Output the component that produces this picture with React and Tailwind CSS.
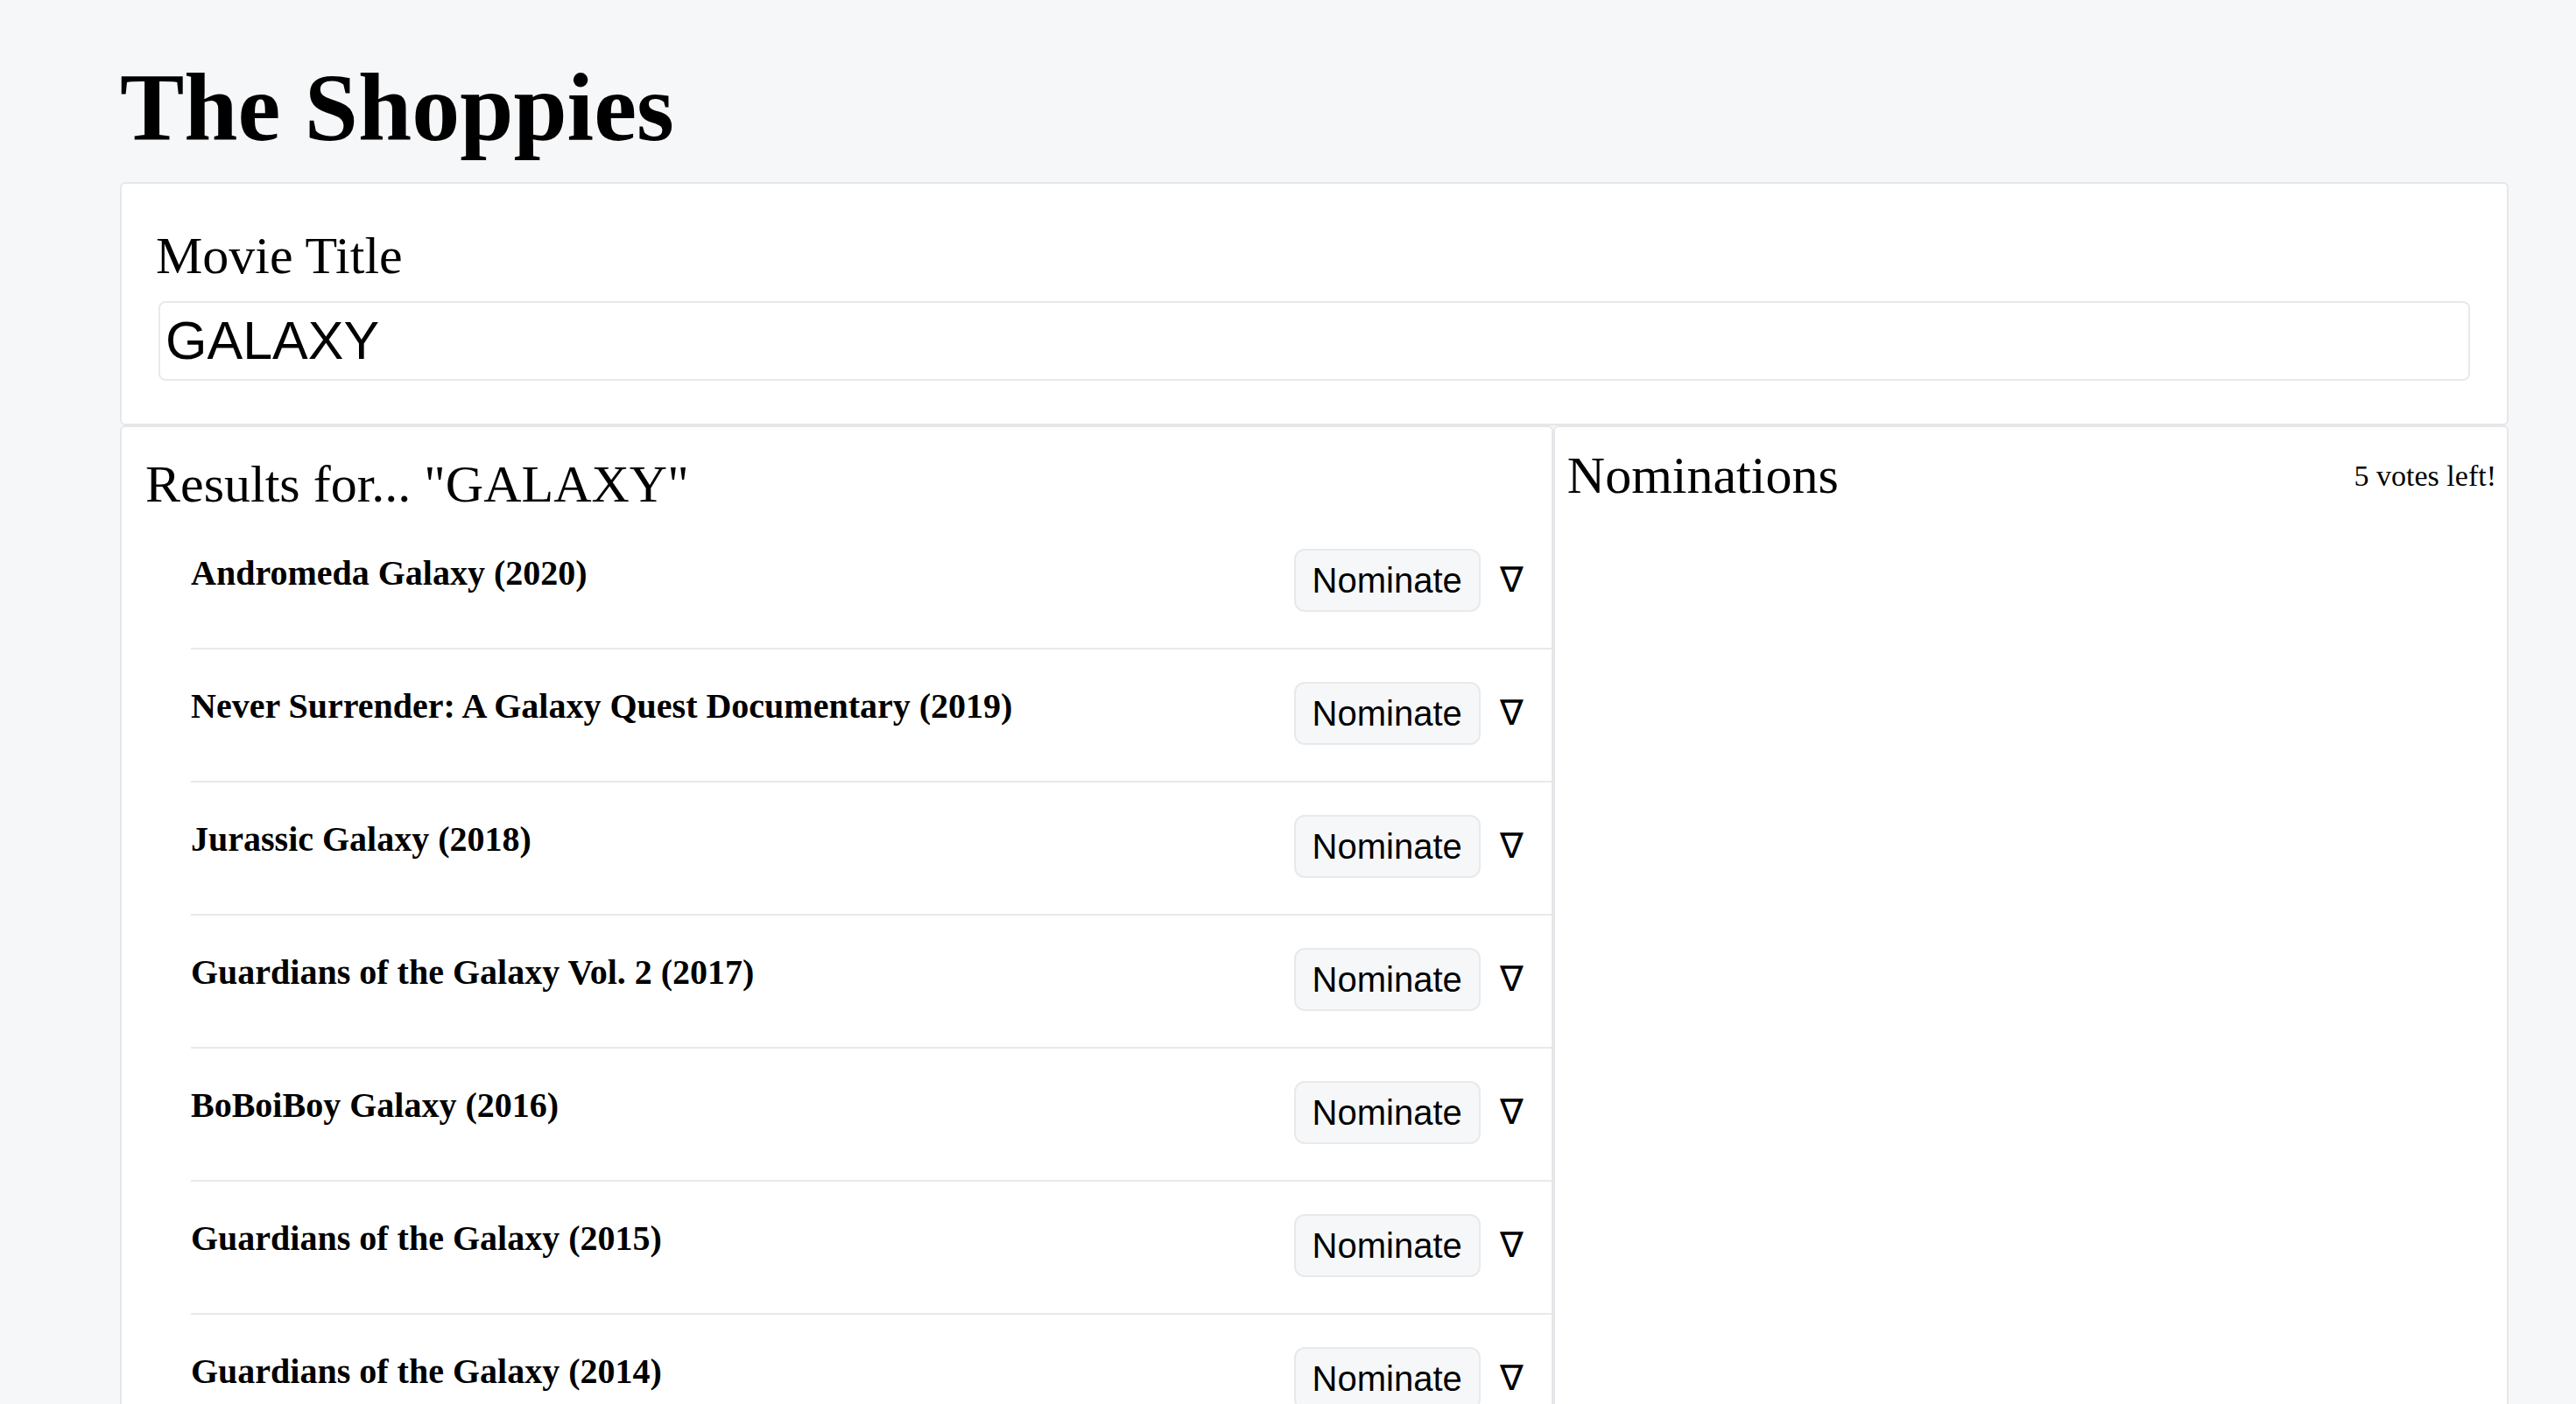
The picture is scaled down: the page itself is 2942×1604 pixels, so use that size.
const movies = [
  { title: "Andromeda Galaxy", year: "2020" },
  { title: "Never Surrender: A Galaxy Quest Documentary", year: "2019" },
  { title: "Jurassic Galaxy", year: "2018" },
  { title: "Guardians of the Galaxy Vol. 2", year: "2017" },
  { title: "BoBoiBoy Galaxy", year: "2016" },
  { title: "Guardians of the Galaxy", year: "2015" },
  { title: "Guardians of the Galaxy", year: "2014" },
  { title: "The Hitchhiker's Guide to the Galaxy", year: "2005" },
  { title: "Galaxy Quest", year: "1999" },
  { title: "Galaxy of Terror", year: "1981" },
];

function MovieRow({ movie }) {
  return (
    <li className="flex items-start justify-between h-[152px] border-b-2 border-[#e8e9eb] pr-[32px]">
      <h4 className="mt-[42px] text-[40px] leading-[46px] font-bold">
        {movie.title} ({movie.year})
      </h4>
      <div className="flex items-center gap-[22px] mt-[37px]">
        <button className="h-[72px] px-[19px] rounded-[12px] border-2 border-[#e8e9eb] bg-[#f6f7f9] text-[40px] leading-[46px] font-['Liberation_Sans',Arial,sans-serif]">
          Nominate
        </button>
        <span className="text-[40px] leading-[46px]">∇</span>
      </div>
    </li>
  );
}

export default function App() {
  const query = "GALAXY";

  return (
    <div className="min-h-screen bg-[#f6f7f9] pl-[137px] pr-[77px] pt-[68px] text-black font-['Liberation_Serif','Times_New_Roman',serif]">
      <h1 className="text-[110px] leading-none font-bold">The Shoppies</h1>

      {/* search */}
      <div className="mt-[30px] bg-white border-2 border-[#e6e7e9] rounded-[6px] px-[42px] pt-[48px] pb-[49px]">
        <label className="block -ml-[3px] text-[60px] leading-[69px]">Movie Title</label>
        <input
          className="block w-full mt-[17px] h-[91px] border-2 border-[#e8e9eb] rounded-[8px] pl-[6px] text-[61px] outline-none font-['Liberation_Sans',Arial,sans-serif]"
          defaultValue={query}
        />
      </div>

      <div className="flex">
        {/* results */}
        <div className="w-[60%] bg-white border-2 border-[#e6e7e9] rounded-[6px]">
          <h2 className="px-[27px] pt-[31px] text-[60px] leading-[69px]">
            Results for... "{query}"
          </h2>
          <ul className="ml-[79px] mt-[2px]">
            {movies.map((m, i) => (
              <MovieRow key={i} movie={m} />
            ))}
          </ul>
        </div>

        {/* nominations */}
        <div className="w-[40%] bg-white border-2 border-[#e6e7e9] rounded-[6px]">
          <div className="flex items-center justify-between pl-[14px] pr-[12px] pt-[21px]">
            <h2 className="text-[60px] leading-[69px]">Nominations</h2>
            <span className="text-[34px] leading-[39px]">5 votes left!</span>
          </div>
        </div>
      </div>
    </div>
  );
}
